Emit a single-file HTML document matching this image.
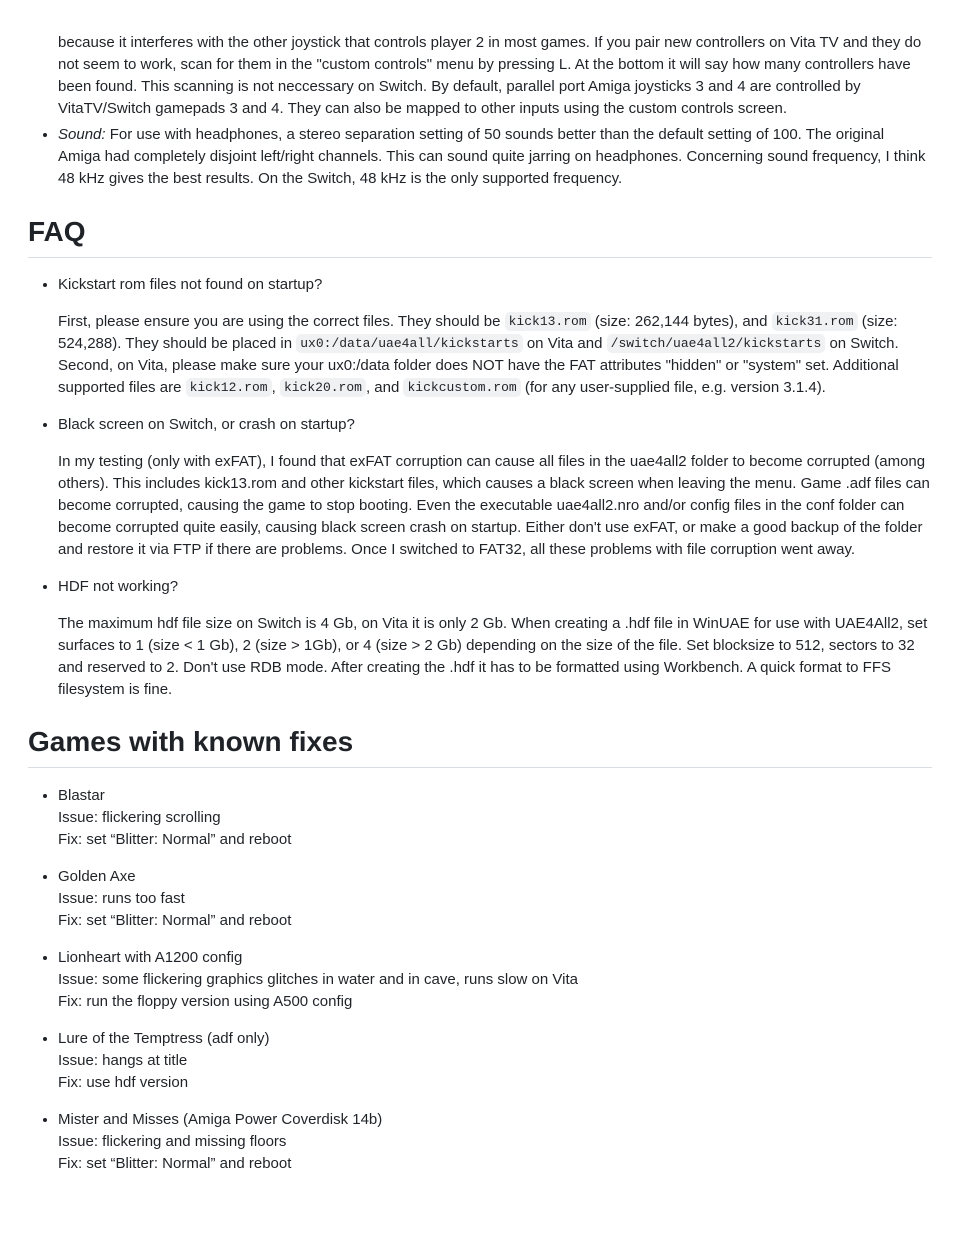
<!DOCTYPE html>
<html><head><meta charset="utf-8"><style>
html,body{margin:0;padding:0;background:#fff;}
body{width:960px;height:1242px;overflow:hidden;font-family:"Liberation Sans",sans-serif;font-size:15px;line-height:22px;color:#1f2328;}
.wrap{padding:32px 28px 0 28px;}
ul{margin:0;padding-left:30px;}
li{white-space:nowrap;}
li+li{margin-top:4px;}
ul.faq li+li,ul.games li+li{margin-top:15px;}
p{margin:15px 0 0 0;}
h1{font-size:28px;line-height:35px;font-weight:600;margin:24px 0 16px 0;padding-bottom:8px;border-bottom:1px solid #d8dee4;}
h1.g{margin-top:23px;margin-bottom:17px;}
code{font-family:"Liberation Mono",monospace;font-size:13px;line-height:16px;background:#eff1f3;padding:2px 4px;border-radius:5px;vertical-align:1px;}
</style></head><body><div class="wrap">
<ul style="list-style:none;padding-left:30px">
<li>because it interferes with the other joystick that controls player 2 in most games. If you pair new controllers on Vita TV and they do<br>not seem to work, scan for them in the "custom controls" menu by pressing L. At the bottom it will say how many controllers have<br>been found. This scanning is not neccessary on Switch. By default, parallel port Amiga joysticks 3 and 4 are controlled by<br>VitaTV/Switch gamepads 3 and 4. They can also be mapped to other inputs using the custom controls screen.</li>
</ul>
<ul>
<li style="margin-top:4px"><em>Sound:</em> For use with headphones, a stereo separation setting of 50 sounds better than the default setting of 100. The original<br>Amiga had completely disjoint left/right channels. This can sound quite jarring on headphones. Concerning sound frequency, I think<br>48 kHz gives the best results. On the Switch, 48 kHz is the only supported frequency.</li>
</ul>
<h1>FAQ</h1>
<ul class="faq">
<li>Kickstart rom files not found on startup?
<p>First, please ensure you are using the correct files. They should be <code>kick13.rom</code> (size: 262,144 bytes), and <code>kick31.rom</code> (size:<br>524,288). They should be placed in <code>ux0:/data/uae4all/kickstarts</code> on Vita and <code>/switch/uae4all2/kickstarts</code> on Switch.<br>Second, on Vita, please make sure your ux0:/data folder does NOT have the FAT attributes "hidden" or "system" set. Additional<br>supported files are <code>kick12.rom</code>, <code>kick20.rom</code>, and <code>kickcustom.rom</code> (for any user-supplied file, e.g. version 3.1.4).</p></li>
<li>Black screen on Switch, or crash on startup?
<p>In my testing (only with exFAT), I found that exFAT corruption can cause all files in the uae4all2 folder to become corrupted (among<br>others). This includes kick13.rom and other kickstart files, which causes a black screen when leaving the menu. Game .adf files can<br>become corrupted, causing the game to stop booting. Even the executable uae4all2.nro and/or config files in the conf folder can<br>become corrupted quite easily, causing black screen crash on startup. Either don't use exFAT, or make a good backup of the folder<br>and restore it via FTP if there are problems. Once I switched to FAT32, all these problems with file corruption went away.</p></li>
<li>HDF not working?
<p>The maximum hdf file size on Switch is 4 Gb, on Vita it is only 2 Gb. When creating a .hdf file in WinUAE for use with UAE4All2, set<br>surfaces to 1 (size &lt; 1 Gb), 2 (size &gt; 1Gb), or 4 (size &gt; 2 Gb) depending on the size of the file. Set blocksize to 512, sectors to 32<br>and reserved to 2. Don't use RDB mode. After creating the .hdf it has to be formatted using Workbench. A quick format to FFS<br>filesystem is fine.</p></li>
</ul>
<h1 class="g">Games with known fixes</h1>
<ul class="games">
<li>Blastar<br>Issue: flickering scrolling<br>Fix: set “Blitter: Normal” and reboot</li>
<li>Golden Axe<br>Issue: runs too fast<br>Fix: set “Blitter: Normal” and reboot</li>
<li>Lionheart with A1200 config<br>Issue: some flickering graphics glitches in water and in cave, runs slow on Vita<br>Fix: run the floppy version using A500 config</li>
<li>Lure of the Temptress (adf only)<br>Issue: hangs at title<br>Fix: use hdf version</li>
<li>Mister and Misses (Amiga Power Coverdisk 14b)<br>Issue: flickering and missing floors<br>Fix: set “Blitter: Normal” and reboot</li>
</ul>
</div></body></html>
